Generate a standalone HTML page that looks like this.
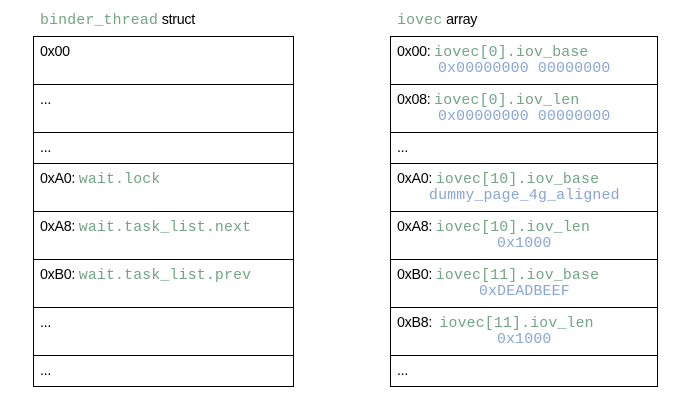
<!DOCTYPE html>
<html><head><style>
body{margin:0;width:692px;height:400px;background:#fff;position:relative;font-family:"Liberation Sans",Arial,sans-serif;font-size:14.3px;color:#000;overflow:hidden}
.m{font-family:"Liberation Mono","Courier New",monospace;font-size:14.8px;color:#72a583;letter-spacing:0.2px}
.b{font-family:"Liberation Mono","Courier New",monospace;font-size:14.8px;color:#88a5d6;position:absolute;white-space:pre;letter-spacing:0.2px}
.t{position:absolute;white-space:pre;line-height:16px;letter-spacing:-0.3px}
.box{position:absolute;border:1px solid #000;box-sizing:border-box}
.row{position:absolute;left:0;right:0;border-top:1px solid #000}
</style></head><body>
<div class="t" style="left:40px;top:12px"><span class="m">binder_thread</span> struct</div>
<div class="t" style="left:397px;top:12px"><span class="m">iovec</span> array</div>

<div class="box" style="left:33px;top:36px;width:261px;height:351px">
<div class="row" style="top:47px"></div><div class="row" style="top:95px"></div><div class="row" style="top:126px"></div><div class="row" style="top:174px"></div><div class="row" style="top:222px"></div><div class="row" style="top:270px"></div><div class="row" style="top:318px"></div>
</div>
<div class="box" style="left:390px;top:36px;width:268px;height:351px">
<div class="row" style="top:47px"></div><div class="row" style="top:95px"></div><div class="row" style="top:126px"></div><div class="row" style="top:174px"></div><div class="row" style="top:222px"></div><div class="row" style="top:270px"></div><div class="row" style="top:318px"></div>
</div>

<div class="t" style="left:40px;top:44px">0x00</div>
<div class="t" style="left:40px;top:92px">...</div>
<div class="t" style="left:40px;top:140px">...</div>
<div class="t" style="left:40px;top:171px">0xA0: <span class="m">wait.lock</span></div>
<div class="t" style="left:40px;top:219px">0xA8: <span class="m">wait.task_list.next</span></div>
<div class="t" style="left:40px;top:267px">0xB0: <span class="m">wait.task_list.prev</span></div>
<div class="t" style="left:40px;top:315px">...</div>
<div class="t" style="left:40px;top:363px">...</div>

<div class="t" style="left:397px;top:44px">0x00: <span class="m">iovec[0].iov_base</span></div>
<div class="b" style="left:438px;top:61px">0x00000000 00000000</div>
<div class="t" style="left:397px;top:92px">0x08: <span class="m">iovec[0].iov_len</span></div>
<div class="b" style="left:438px;top:109px">0x00000000 00000000</div>
<div class="t" style="left:397px;top:140px">...</div>
<div class="t" style="left:397px;top:171px">0xA0: <span class="m">iovec[10].iov_base</span></div>
<div class="b" style="left:429px;top:188px">dummy_page_4g_aligned</div>
<div class="t" style="left:397px;top:219px">0xA8: <span class="m">iovec[10].iov_len</span></div>
<div class="b" style="left:497px;top:236px">0x1000</div>
<div class="t" style="left:397px;top:267px">0xB0: <span class="m">iovec[11].iov_base</span></div>
<div class="b" style="left:479px;top:284px">0xDEADBEEF</div>
<div class="t" style="left:397px;top:315px">0xB8:  <span class="m">iovec[11].iov_len</span></div>
<div class="b" style="left:497px;top:332px">0x1000</div>
<div class="t" style="left:397px;top:363px">...</div>
</body></html>
